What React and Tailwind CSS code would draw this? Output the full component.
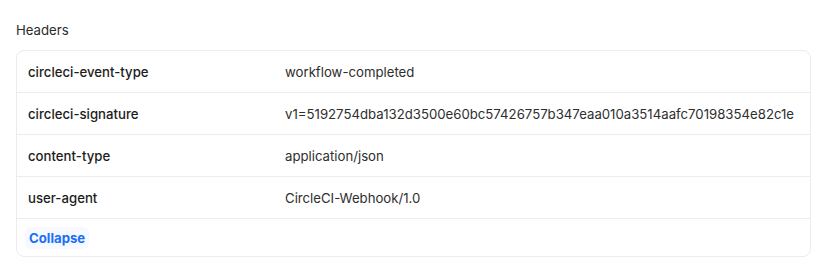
export default function App() {
  const rows = [
    ["circleci-event-type", "workflow-completed"],
    ["circleci-signature", "v1=5192754dba132d3500e60bc57426757b347eaa010a3514aafc70198354e82c1e"],
    ["content-type", "application/json"],
    ["user-agent", "CircleCI-Webhook/1.0"],
  ];
  return (
    <div className="bg-white w-[828px] h-[277px] pt-5 px-4 text-[13.2px] leading-5" style={{ fontFamily: "Inter, 'Noto Sans', sans-serif" }}>
      <div className="text-[#2b2b2b] mb-[10px]">Headers</div>
      <div className="w-[795px] border border-[#ececec] rounded-lg">
        {rows.map(([k, v]) => (
          <div key={k} className="flex items-center h-[42px] border-b border-[#ececec] px-[11px]">
            <div className="w-[257px] shrink-0 font-medium text-[#1c1c1c]">{k}</div>
            <div className="text-[#2e2e2e] whitespace-nowrap">{v}</div>
          </div>
        ))}
        <div className="flex items-center h-[37px] px-[8px]">
          <button className="h-[22px] px-[4px] rounded-md bg-[#f6f9ff] text-[#1a6ff5] font-bold leading-5">Collapse</button>
        </div>
      </div>
    </div>
  );
}
